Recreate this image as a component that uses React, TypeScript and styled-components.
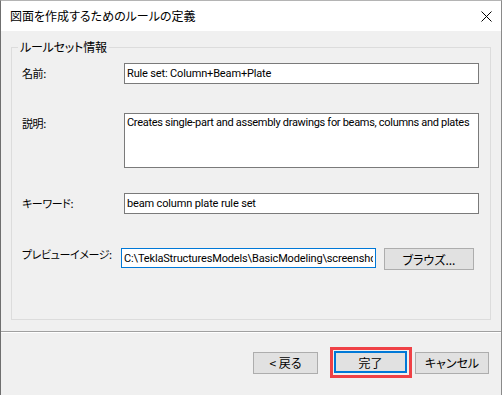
import React from 'react';
import styled, { createGlobalStyle } from 'styled-components';

const GlobalStyle = createGlobalStyle`
  html, body {
    margin: 0;
    padding: 0;
    background: #f0f0f0;
  }
  * {
    box-sizing: border-box;
  }
`;

const uiFont = `Roboto, "Noto Sans CJK JP", sans-serif`;
const jpFont = `"Noto Sans CJK JP", "Noto Sans", sans-serif`;

const Window = styled.div`
  width: 502px;
  height: 395px;
  display: flex;
  flex-direction: column;
  background: #f0f0f0;
  border-left: 1px solid #6f6f6f;
  border-right: 1px solid #8a8a8a;
  border-top: 1px solid #b4b4b4;
  font-family: ${jpFont};
  font-size: 12px;
  color: #000;
  overflow: hidden;
`;

const TitleBar = styled.div`
  height: 30px;
  flex-shrink: 0;
  background: #fff;
  display: flex;
  align-items: center;
  justify-content: space-between;
  padding: 0 9px 0 9px;
`;

const TitleText = styled.div`
  font-family: ${jpFont};
  font-size: 12px;
  font-feature-settings: 'palt';
  line-height: 16px;
`;

const CloseButton = styled.div`
  width: 12px;
  height: 12px;
  display: flex;
  align-items: center;
  justify-content: center;
`;

const Body = styled.div`
  padding: 8px 10px 0 10px;
`;

const Group = styled.fieldset`
  margin: 0;
  padding: 0;
  height: 281px;
  border: 1px solid #dcdcdc;
  display: flex;
  flex-direction: column;
`;

const Legend = styled.legend`
  margin-left: 6px;
  padding: 0 2px;
  font-family: ${jpFont};
  font-size: 12px;
  font-feature-settings: 'palt';
  letter-spacing: -0.2px;
  line-height: 16px;
`;

const Row = styled.div<{ $top: number }>`
  display: flex;
  align-items: flex-start;
  margin-top: ${(p) => p.$top}px;
  padding-left: 10px;
`;

const Label = styled.div<{ $width: number; $shift?: number }>`
  width: ${(p) => p.$width}px;
  flex-shrink: 0;
  white-space: nowrap;
  line-height: 20px;
  margin-top: ${(p) => p.$shift ?? 0}px;
  font-family: ${jpFont};
  font-size: 11px;
  font-feature-settings: 'palt';
  letter-spacing: -0.4px;
`;

const TextBox = styled.input<{ $width: number; $focused?: boolean }>`
  width: ${(p) => p.$width}px;
  height: ${(p) => (p.$focused ? 20 : 21)}px;
  margin: 0;
  padding: 0 2px;
  border: 1px solid ${(p) => (p.$focused ? '#0078d7' : '#7a7a7a')};
  background: #fff;
  font-family: ${uiFont};
  font-size: 11px;
  letter-spacing: -0.15px;
  color: #000;
  outline: none;
`;

const TextArea = styled.textarea`
  width: 355px;
  height: 55px;
  margin: 0;
  padding: 2px 2px;
  border: 1px solid #7a7a7a;
  background: #fff;
  font-family: ${uiFont};
  font-size: 11px;
  letter-spacing: -0.3px;
  line-height: 14px;
  color: #000;
  resize: none;
  outline: none;
  overflow: hidden;
`;

const Button = styled.button<{ $width: number; $default?: boolean }>`
  width: ${(p) => p.$width}px;
  height: 22px;
  margin: 0;
  padding: 0;
  background: #e1e1e1;
  border: ${(p) => (p.$default ? '2px solid #0078d7' : '1px solid #adadad')};
  font-family: ${jpFont};
  font-size: 12px;
  font-feature-settings: 'palt';
  color: #000;
  display: flex;
  align-items: center;
  justify-content: center;
`;

const BrowseButton = styled(Button)`
  margin-left: 8px;
`;

const Separator = styled.div`
  margin-top: 11px;
  border-top: 1px solid #a0a0a0;
  border-bottom: 1px solid #ffffff;
`;

const Footer = styled.div`
  display: flex;
  justify-content: flex-end;
  align-items: center;
  padding: 14px 12px 0 0;
`;

const Highlight = styled.div`
  border: 3px solid #ef4146;
  padding: 1px 2px 2px 1px;
  margin: 0 3px 0 12px;
`;

const App: React.FC = () => {
  return (
    <>
      <GlobalStyle />
      <Window>
        <TitleBar>
          <TitleText>図面を作成するためのルールの定義</TitleText>
          <CloseButton>
            <svg width="11" height="11" viewBox="0 0 11 11">
              <path d="M0.5 0.5 L10.5 10.5 M10.5 0.5 L0.5 10.5" stroke="#000" strokeWidth="1" fill="none" />
            </svg>
          </CloseButton>
        </TitleBar>
        <Body>
          <Group>
            <Legend>ルールセット情報</Legend>
            <Row $top={8}>
              <Label $width={102}>名前:</Label>
              <TextBox $width={355} readOnly value="Rule set: Column+Beam+Plate" />
            </Row>
            <Row $top={29}>
              <Label $width={102}>説明:</Label>
              <TextArea readOnly value="Creates single-part and assembly drawings for beams, columns and plates" />
            </Row>
            <Row $top={25}>
              <Label $width={102}>キーワード:</Label>
              <TextBox $width={355} readOnly value="beam column plate rule set" />
            </Row>
            <Row $top={34}>
              <Label $width={99} $shift={-4}>プレビューイメージ:</Label>
              <TextBox
                $width={255}
                $focused
                readOnly
                value="C:\TeklaStructuresModels\BasicModeling\screenshots\rule_set.png"
              />
              <BrowseButton $width={90}>ブラウズ...</BrowseButton>
            </Row>
          </Group>
        </Body>
        <Separator />
        <Footer>
          <Button $width={65}>&lt; 戻る</Button>
          <Highlight>
            <Button $width={73} $default>
              完了
            </Button>
          </Highlight>
          <Button $width={74}>キャンセル</Button>
        </Footer>
      </Window>
    </>
  );
};

export default App;
